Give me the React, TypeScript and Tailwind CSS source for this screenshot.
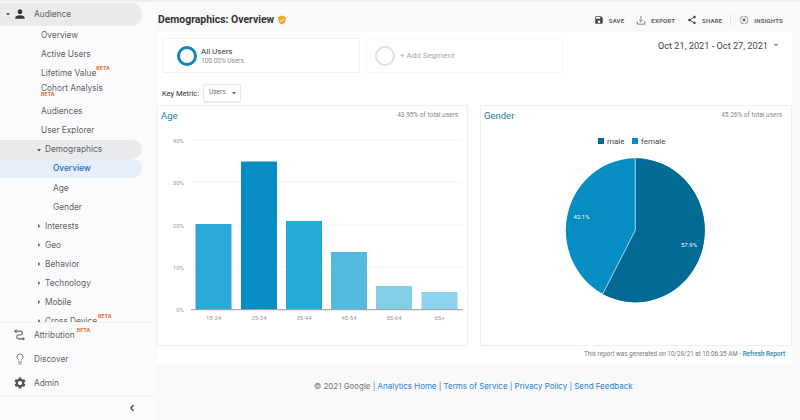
import { FC, ReactNode } from "react";
import { MdPerson, MdSave, MdShare, MdVerifiedUser, MdSettings, MdArrowDropDown, MdArrowRight } from "react-icons/md";
import { Lightbulb, ChevronLeft } from "lucide-react";

const Beta: FC<{ className?: string }> = ({ className = "" }) => (
  <span className={`font-bold text-[5px] leading-none text-[#e9662c] tracking-[0.2px] ${className}`}>BETA</span>
);

const SubItem: FC<{ label: string; beta?: boolean }> = ({ label, beta }) => (
  <div className="h-[19.1px] flex items-center pl-[41px]">
    <span>{label}</span>
    {beta && <Beta className="self-start mt-[2px]" />}
  </div>
);

const Group: FC<{ label: string; beta?: boolean }> = ({ label, beta }) => (
  <div className="h-[19.1px] flex items-center pl-[35px]">
    <MdArrowRight className="w-[10px] h-[10px] -ml-[1px] mr-[1px] text-[#555]" />
    <span>{label}</span>
    {beta && <Beta className="self-start mt-[2px] ml-[1px]" />}
  </div>
);

const BottomItem: FC<{ icon: ReactNode; children: ReactNode }> = ({ icon, children }) => (
  <div className="h-[24px] flex items-center">
    <div className="w-[34px] flex justify-center pl-[5px] text-[#5f6368]">{icon}</div>
    {children}
  </div>
);

const Sidebar: FC = () => (
  <div className="w-[156px] shrink-0 h-[418px] flex flex-col bg-[#fbfbfd] text-[8.3px] text-[#5f6368] font-['Inter',sans-serif]">
    <div className="h-[320px] shrink-0 overflow-hidden pt-[1px] pr-[14px]">
      <div className="h-[22.5px] flex items-center bg-[#e9eaec] rounded-r-[11px]">
        <MdArrowDropDown className="w-[10px] h-[10px] ml-[3px] text-[#333]" />
        <MdPerson className="w-[14px] h-[14px] text-[#333]" />
        <span className="ml-[7px]">Audience</span>
      </div>
      <SubItem label="Overview" />
      <SubItem label="Active Users" />
      <SubItem label="Lifetime Value" beta />
      <div className="h-[19.1px] pl-[41px] leading-none">
        <div className="pt-[1px]">Cohort Analysis</div>
        <Beta className="block" />
      </div>
      <SubItem label="Audiences" />
      <SubItem label="User Explorer" />
      <div className="h-[19.1px] flex items-center pl-[35px] bg-[#e9eaec] rounded-r-[10px]">
        <MdArrowDropDown className="w-[10px] h-[10px] -ml-[1px] mr-[1px] text-[#333]" />
        <span>Demographics</span>
      </div>
      <div className="h-[19.1px] flex items-center pl-[53px] bg-[#e6eefa] rounded-r-[10px] text-[#1a6fc4] font-medium">Overview</div>
      <div className="h-[19.1px] flex items-center pl-[53px]">Age</div>
      <div className="h-[19.1px] flex items-center pl-[53px]">Gender</div>
      <Group label="Interests" />
      <Group label="Geo" />
      <Group label="Behavior" />
      <Group label="Technology" />
      <Group label="Mobile" />
      <Group label="Cross Device" beta />
    </div>
    <div className="h-[74px] shrink-0 border-y border-[#f1f1f3]">
      <BottomItem
        icon={
          <svg viewBox="0 0 14 14" className="w-[12px] h-[12px]" fill="none" stroke="currentColor" strokeWidth="1.3">
            <path d="M1 2.5h6.5a2 2 0 0 1 0 4.5H5.5a2 2 0 0 0 0 4.5H11" />
            <path d="M3 .8 1 2.5 3 4.2M10 10l2 1.5-2 1.5" />
          </svg>
        }
      >
        <span>Attribution</span>
        <Beta className="self-start mt-[5px] ml-[2px]" />
      </BottomItem>
      <BottomItem icon={<Lightbulb className="w-[12px] h-[12px]" strokeWidth={1.6} />}>
        <span>Discover</span>
      </BottomItem>
      <BottomItem icon={<MdSettings className="w-[14px] h-[14px] text-[#555]" />}>
        <span>Admin</span>
      </BottomItem>
    </div>
    <div className="flex-1 flex items-center justify-end pr-[19px]">
      <ChevronLeft className="w-[10px] h-[10px] text-[#444]" strokeWidth={3} />
    </div>
  </div>
);

const Action: FC<{ icon: ReactNode; label: string; className?: string }> = ({ icon, label, className = "" }) => (
  <div className={`flex items-center text-[#5f6368] ${className}`}>
    {icon}
    <span className="ml-[5px] text-[6px] font-bold tracking-[0.2px]">{label}</span>
  </div>
);

const Header: FC = () => (
  <div className="h-[32px] pt-[8px] flex items-center font-['Roboto',sans-serif] pr-[17px] pl-[2px]">
    <span className="text-[10.4px] font-bold text-[#333]">Demographics: Overview</span>
    <MdVerifiedUser className="ml-[3px] w-[10px] h-[10px] text-[#f2a627]" />
    <div className="ml-auto flex items-center">
      <Action icon={<MdSave className="w-[10px] h-[10px] text-[#444]" />} label="SAVE" />
      <Action
        className="ml-[12px]"
        icon={
          <svg viewBox="0 0 12 12" className="w-[10px] h-[10px]" fill="none" stroke="currentColor" strokeWidth="0.9">
            <path d="M6 1v7M3.8 5.8 6 8l2.2-2.2M1.5 7.5V11h9V7.5" />
          </svg>
        }
        label="EXPORT"
      />
      <Action className="ml-[12px]" icon={<MdShare className="w-[10px] h-[10px] text-[#444]" />} label="SHARE" />
      <div className="w-px h-[12px] bg-[#e3e3e3] mx-[8px]" />
      <Action
        icon={
          <svg viewBox="0 0 12 12" className="w-[10px] h-[10px]" fill="none" stroke="currentColor" strokeWidth="0.9">
            <circle cx="6" cy="6" r="4.6" strokeDasharray="6 1.2" />
            <circle cx="6" cy="6" r="1.7" fill="currentColor" stroke="none" />
          </svg>
        }
        label="INSIGHTS"
      />
    </div>
  </div>
);

const Segment: FC<{ children: ReactNode; className?: string }> = ({ children, className = "" }) => (
  <div className={`w-[197px] h-[35px] border flex items-center ${className}`}>{children}</div>
);

const Toolbar: FC = () => (
  <>
    <div className="flex gap-[6px] pt-[6px] pl-[6px] pr-[10px]">
      <Segment className="border-[#f1f2f4]">
        <div className="ml-[13px] w-[20px] h-[20px] rounded-full border-[3px] border-[#0f86b8]" />
        <div className="ml-[4px] leading-none pt-[1px]">
          <div className="text-[8px] text-[#333]">All Users</div>
          <div className="text-[6.5px] text-[#8a8a8a] mt-[2px]">100.00% Users</div>
        </div>
      </Segment>
      <Segment className="border-[#f8f8f9]">
        <div className="ml-[8px] w-[20px] h-[20px] rounded-full border-[2px] border-[#dfdfdf]" />
        <div className="ml-[5px] text-[8px] text-[#a6a6a6]">+ Add Segment</div>
      </Segment>
      <div className="ml-auto flex items-start h-[20px] text-[9.2px] text-[#444] pt-[1px]">
        <span>Oct 21, 2021 - Oct 27, 2021</span>
        <MdArrowDropDown className="w-[12px] h-[12px] ml-[2px] text-[#999]" />
      </div>
    </div>
    <div className="h-[32px] flex items-start pl-[5px] pt-[11px]">
      <span className="text-[7.5px] text-[#333] mt-[4px]">Key Metric:</span>
      <div className="ml-[4px] w-[38px] h-[18px] flex items-center border border-[#e8e8e8] rounded-[2px] pl-[5px] text-[6.5px] text-[#666] shadow-[0_1px_1px_rgba(0,0,0,0.08)]">
        Users
        <MdArrowDropDown className="w-[10px] h-[10px] ml-[3px] text-[#444]" />
      </div>
    </div>
  </>
);

const bars = [
  { label: "18-24", x: 195.5, top: 224, fill: "#2aa9d8" },
  { label: "25-34", x: 241, top: 161.5, fill: "#058dc4" },
  { label: "35-44", x: 286, top: 221, fill: "#22abd9" },
  { label: "45-54", x: 331, top: 252, fill: "#55bae0" },
  { label: "55-64", x: 376, top: 286, fill: "#82cde8" },
  { label: "65+", x: 421.5, top: 292, fill: "#8dd3ee" },
];
const ticks = [
  { label: "40%", y: 140 },
  { label: "30%", y: 182 },
  { label: "20%", y: 225 },
  { label: "10%", y: 267 },
];

const AgeChart: FC = () => (
  // svg coords are page coords shifted by the panel's origin
  <svg viewBox="158 120 309 224" className="w-[309px] h-[224px] block font-['Roboto',sans-serif]">
    {ticks.map((t) => (
      <g key={t.label}>
        <line x1="192" x2="463" y1={t.y} y2={t.y} stroke="#f3f4f6" />
        <text x="184" y={t.y + 2.5} textAnchor="end" fontSize="6" fill="#999">{t.label}</text>
      </g>
    ))}
    <text x="184" y="312" textAnchor="end" fontSize="6" fill="#999">0%</text>
    {bars.map((b) => (
      <g key={b.label}>
        <rect x={b.x} y={b.top} width="36" height={309.5 - b.top} fill={b.fill} />
        <text x={b.x + 18} y="319.5" textAnchor="middle" fontSize="6" fill="#999">{b.label}</text>
      </g>
    ))}
    <line x1="191" x2="463" y1="309.7" y2="309.7" stroke="#999" />
  </svg>
);

const PieChart: FC = () => (
  <svg viewBox="481 120 310 224" className="w-[310px] h-[224px] block font-['Roboto',sans-serif]">
    <rect x="598" y="138" width="6" height="6" fill="#036a96" />
    <text x="607" y="144" fontSize="8" fill="#444">male</text>
    <rect x="632" y="138" width="6" height="6" fill="#058dc4" />
    <text x="641" y="144" fontSize="8" fill="#444">female</text>
    <ellipse cx="635.3" cy="230.3" rx="69.5" ry="72" fill="#058dc4" />
    <path d="M635.3 158.3A69.5 72 0 1 1 602.7 293.9L635.3 230.3Z" fill="#036a96" />
    <path d="M635.3 158.3V230.3L602.7 293.9" fill="none" stroke="#d5eef8" strokeWidth="0.8" />
    <text x="689" y="246.5" textAnchor="middle" fontSize="6" fill="#fff">57.9%</text>
    <text x="581.6" y="218.5" textAnchor="middle" fontSize="6" fill="#fff">42.1%</text>
  </svg>
);

const Panel: FC<{ title: string; share: string; children: ReactNode }> = ({ title, share, children }) => (
  <div className="h-[241px] border border-[#eceef1]">
    <div className="h-[14px] flex items-start justify-between pl-[3px] pr-[9px] pt-[5px]">
      <span className="text-[9.5px] leading-none text-[#1f7ea8]">{title}</span>
      <span className="text-[6.5px] leading-none text-[#888] mt-[1px]">{share}</span>
    </div>
    {children}
  </div>
);

const App: FC = () => (
  <div className="w-[800px] h-[420px] overflow-hidden flex bg-[#f8f9fb] border-t-[2px] border-[#eeeeee]">
    <Sidebar />
    <div className="flex-1 -mt-[2px] min-w-0 font-['Roboto',sans-serif]">
      <Header />
      <div className="ml-[1px] mr-[8px] h-[332px] bg-white">
        <Toolbar />
        <div className="grid grid-cols-[311px_312px] gap-[12px]">
          <Panel title="Age" share="43.95% of total users">
            <AgeChart />
          </Panel>
          <Panel title="Gender" share="45.26% of total users">
            <PieChart />
          </Panel>
        </div>
        <div className="h-[18px] flex items-center justify-end pr-[7px] text-[6.3px] text-[#777]">
          This report was generated on 10/28/21 at 10:06:35 AM -&nbsp;<span className="text-[#1f7ea8] font-medium">Refresh Report</span>
        </div>
      </div>
      <div className="pt-[17px] pl-[158px] text-[7.95px] text-[#777] font-['Inter',sans-serif]">
        © 2021 Google <span className="text-[#2a7fd0]">| Analytics Home | Terms of Service | Privacy Policy | Send Feedback</span>
      </div>
    </div>
  </div>
);

export default App;
